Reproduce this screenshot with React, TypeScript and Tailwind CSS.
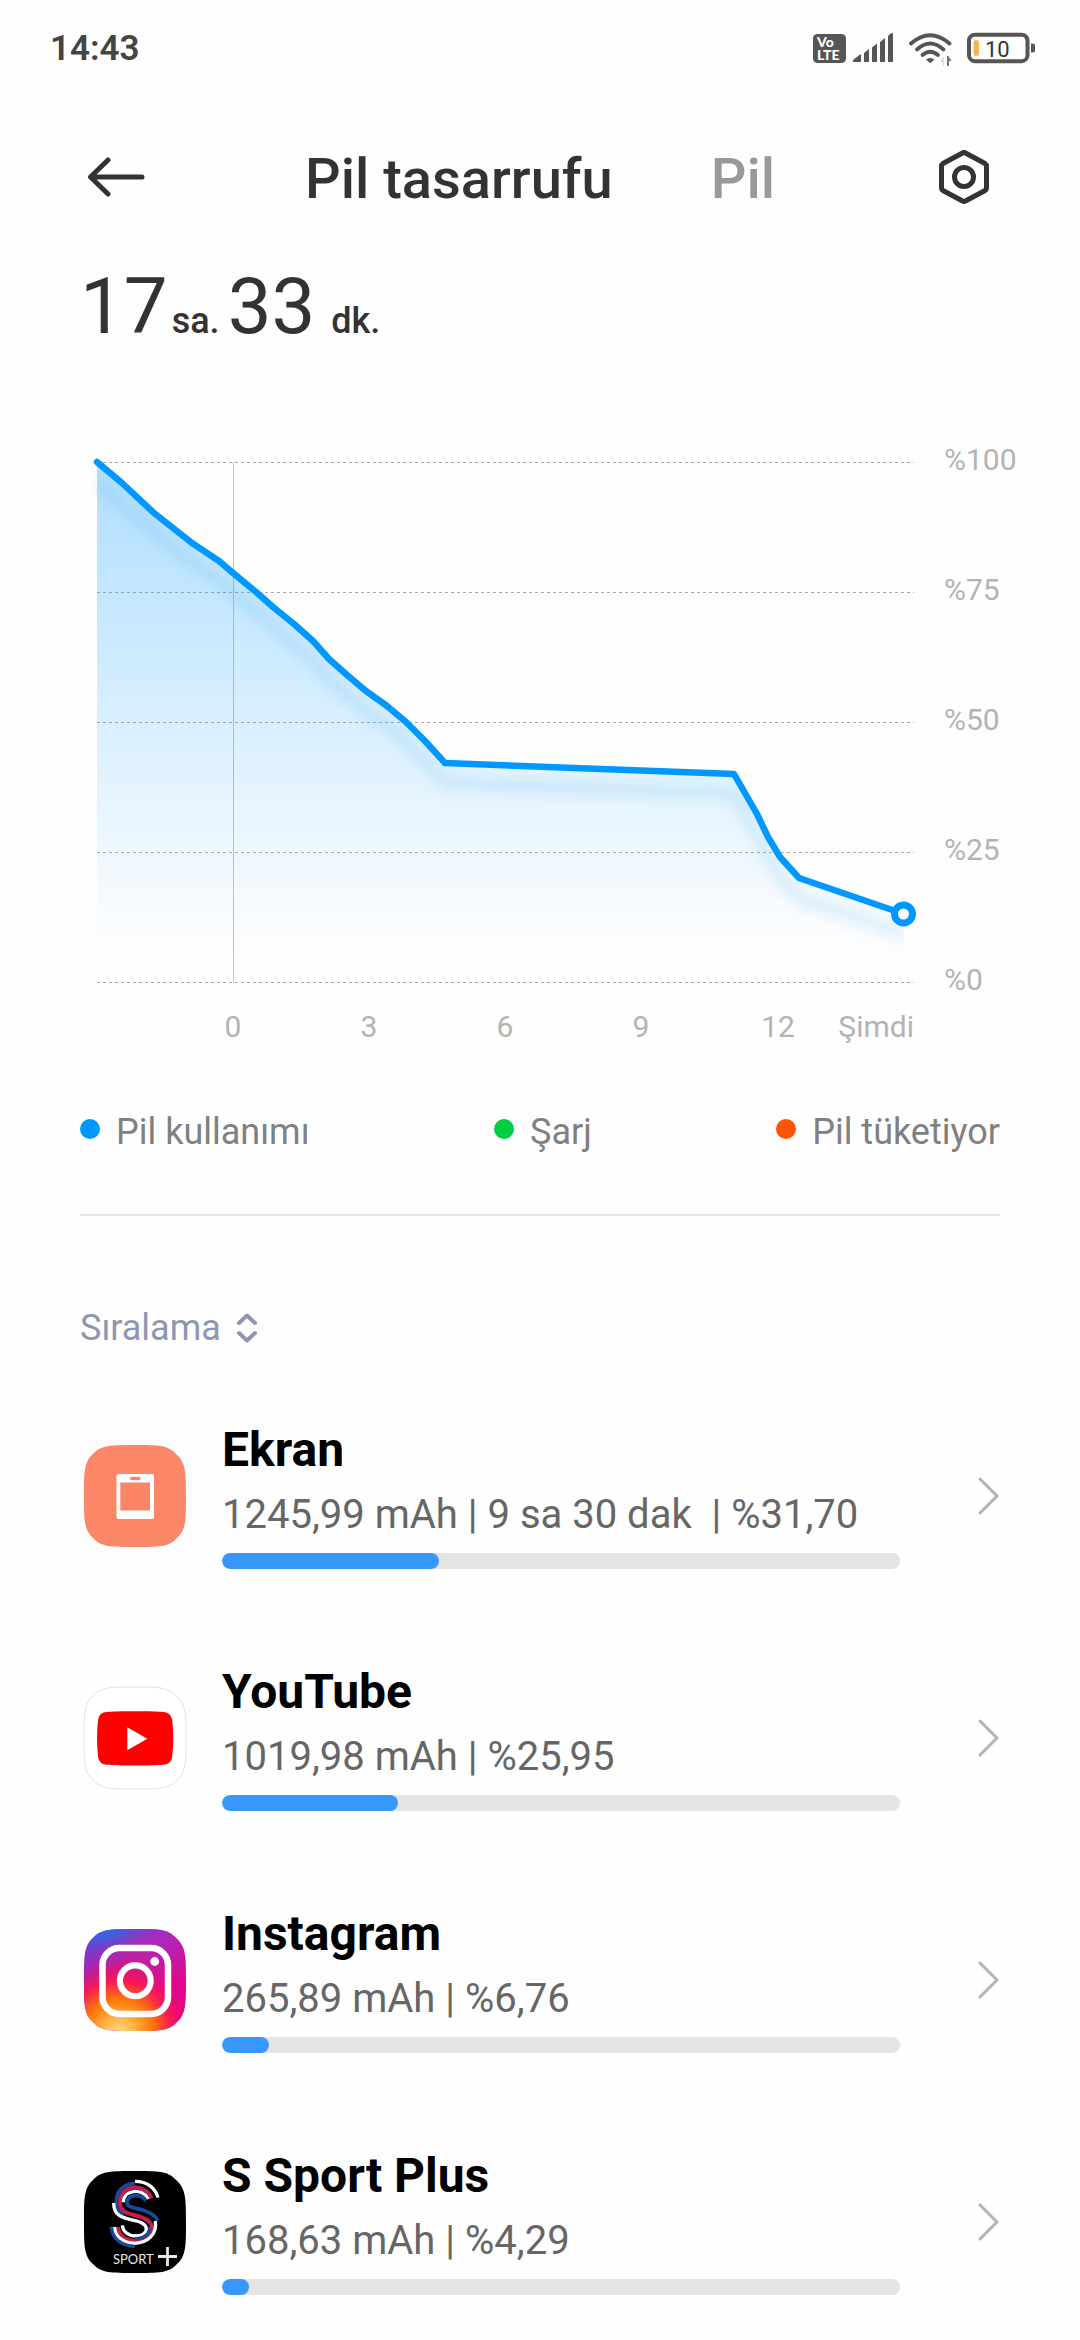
import React, { useState } from 'react';

interface AppUsage {
  id: string;
  name: string;
  detail: string;
  percent: number;
  icon: React.ReactNode;
}

const LINE_POINTS =
  '97,462 122,483 154,513 192,543 219,561 233,573 256,592 273,607 294,624 313,641 329,659 347,675 366,691 387,706 406,722 425,741 445,763 734,774 757,814 768,837 780,857 799,878 904,914';

const LEVELS = [
  { label: '%100', y: 462 },
  { label: '%75', y: 592 },
  { label: '%50', y: 722 },
  { label: '%25', y: 852 },
  { label: '%0', y: 982 },
];

const HOURS = [
  { label: '0', x: 233 },
  { label: '3', x: 369 },
  { label: '6', x: 505 },
  { label: '9', x: 641 },
  { label: '12', x: 778 },
];

const LEGEND = [
  { label: 'Pil kullanımı', color: 'bg-[#0098ff]' },
  { label: 'Şarj', color: 'bg-[#00cc44]' },
  { label: 'Pil tüketiyor', color: 'bg-[#ff5500]' },
];

// Rounded launcher tile shared by all app icons
const TILE = 'M52 1C76 1 84 1 92 9C103 18 103 28 103 52C103 76 103 86 94 94C86 103 76 103 52 103C28 103 18 103 10 94C1 86 1 76 1 52C1 28 1 18 10 10C18 1 28 1 52 1Z';

const ScreenIcon = () => (
  <svg viewBox="0 0 104 104" className="size-[104px]" aria-hidden="true">
    <path d={TILE} fill="#fb8768" />
    <rect x="33.5" y="30" width="37.5" height="45" rx="2" fill="#fff" />
    <rect x="37.3" y="38.5" width="29.7" height="28" fill="#f98566" />
    <rect x="47" y="32.8" width="10.5" height="3.2" rx="1.6" fill="#f98566" />
  </svg>
);

const YouTubeIcon = () => (
  <svg viewBox="0 0 104 104" className="size-[104px]" aria-hidden="true">
    <path d={TILE} fill="#fff" stroke="#e2e2e2" strokeWidth="1" />
    <path
      d="M52 25.2C68 25.2 75 25.5 80 26C86 26.5 88.6 29 89.3 35C90.6 46 90.6 58 89.3 70C88.6 75.6 86 78.2 80 78.8C70 79.8 34 79.8 24 78.8C18 78.2 15.7 75.6 15 70C13.7 58 13.7 46 15 35C15.7 29 18 26.5 24 26C29 25.5 36 25.2 52 25.2Z"
      fill="#ff0000"
    />
    <path d="M44.3 41.2L64.3 52.7L44.3 64.2Z" fill="#fff" />
  </svg>
);

const InstagramIcon = () => (
  <svg viewBox="0 0 104 104" className="size-[104px]" aria-hidden="true">
    <defs>
      <linearGradient id="ig-base" x1="0" y1="0" x2="1" y2="0.6">
        <stop offset="0" stopColor="#7a35d0" />
        <stop offset="0.45" stopColor="#c0209a" />
        <stop offset="1" stopColor="#e0058c" />
      </linearGradient>
      <radialGradient id="ig-blue" gradientUnits="userSpaceOnUse" cx="0" cy="0" r="1" gradientTransform="translate(18 -2) rotate(-6) scale(68 34)">
        <stop offset="0" stopColor="#1f74ea" />
        <stop offset="0.4" stopColor="#3f5fe0" stopOpacity="0.85" />
        <stop offset="1" stopColor="#7a3ad8" stopOpacity="0" />
      </radialGradient>
      <radialGradient id="ig-purple" gradientUnits="userSpaceOnUse" cx="80" cy="4" r="50">
        <stop offset="0" stopColor="#a22bc4" />
        <stop offset="1" stopColor="#b428b4" stopOpacity="0" />
      </radialGradient>
      <radialGradient id="ig-warm" gradientUnits="userSpaceOnUse" cx="36" cy="106" r="76">
        <stop offset="0" stopColor="#ffe08a" />
        <stop offset="0.2" stopColor="#ffb84a" />
        <stop offset="0.45" stopColor="#ff7a08" />
        <stop offset="0.7" stopColor="#fa1a50" stopOpacity="0.95" />
        <stop offset="1" stopColor="#ee0070" stopOpacity="0" />
      </radialGradient>
    </defs>
    <path d={TILE} fill="url(#ig-base)" />
    <path d={TILE} fill="url(#ig-purple)" />
    <path d={TILE} fill="url(#ig-blue)" />
    <path d={TILE} fill="url(#ig-warm)" />
    <rect x="19.5" y="20" width="65.5" height="66" rx="17" fill="none" stroke="#fff" strokeWidth="6.5" />
    <circle cx="52.3" cy="52.8" r="15.4" fill="none" stroke="#fff" strokeWidth="6.2" />
    <circle cx="71.7" cy="33.5" r="4.4" fill="#fff" />
  </svg>
);

const SSportIcon = () => (
  <svg viewBox="0 0 104 104" className="size-[104px]" aria-hidden="true">
    <path d={TILE} fill="#000" />
    {/* Ribbon strands are drawn on a 3x grid */}
    <g transform="scale(0.3333) translate(-39 -91)" fill="none" strokeWidth="10">
      <path d="M195 125C232 125 256 145 264 174" stroke="#fff" />
      <path d="M195 132C160 132 139 155 139 188C139 208 148 220 162 226" stroke="#174a9c" strokeWidth="11" />
      <path d="M245 176C225 128 150 134 150 188C150 224 184 221 215 233C245 244 251 262 242 282C222 320 144 308 144 262" stroke="#c41e4c" strokeWidth="12" />
      <path d="M235 178C216 143 160 150 160 188" stroke="#fff" />
      <path d="M228 183C212 160 171 164 171 188C171 206 195 203 220 212C246 221 259 230 263 243" stroke="#174a9c" strokeWidth="11" />
      <path d="M131 190C131 232 162 235 192 242C216 247 229 254 229 268C228 284 212 289 195 289C174 288 158 275 157 257" stroke="#fff" />
      <path d="M195 297C220 297 238 286 240 262" stroke="#174a9c" />
      <path d="M256 244C262 284 234 309 195 311C158 310 134 290 134 262" stroke="#fff" />
      <path d="M195 320C154 319 125 296 124 261" stroke="#174a9c" />
    </g>
    <text x="30" y="94" fontSize="13" fill="#e8e8e8" fontFamily="Lato, sans-serif">
      SPORT
    </text>
    <path d="M75 86.5H94M84.5 77V96" stroke="#e8e8e8" strokeWidth="2.8" />
  </svg>
);

const APPS: AppUsage[] = [
  { id: 'screen', name: 'Ekran', detail: '1245,99 mAh | 9 sa 30 dak  | %31,70', percent: 31.7, icon: <ScreenIcon /> },
  { id: 'youtube', name: 'YouTube', detail: '1019,98 mAh | %25,95', percent: 25.95, icon: <YouTubeIcon /> },
  { id: 'instagram', name: 'Instagram', detail: '265,89 mAh | %6,76', percent: 6.76, icon: <InstagramIcon /> },
  { id: 'ssport', name: 'S Sport Plus', detail: '168,63 mAh | %4,29', percent: 4.29, icon: <SSportIcon /> },
];

const StatusBar = () => (
  <div className="flex h-[98px] items-center justify-between pr-11 pl-[50px]">
    <span className="text-[35px] leading-10 font-semibold text-[#444444]">14:43</span>
    <svg viewBox="812 30 224 38" className="h-[38px] w-[224px]" aria-hidden="true">
      <rect x="813" y="34" width="33" height="29" rx="4.5" fill="#555" />
      <g fill="#fff" fontFamily="Lato, sans-serif" fontWeight="900">
        <text x="817" y="46.5" fontSize="14">Vo</text>
        <text x="817" y="60" fontSize="14">LTE</text>
      </g>
      <path
        d="M853 62V60L860 54.5H861V62ZM864 62V53L869 49V62ZM872 62V47.5L877 43.5V62ZM880 62V42L885 38V62ZM888 62V36Q890 33 893 33V62Z"
        fill="#555"
      />
      <g fill="none" stroke="#555" strokeWidth="3.8" strokeLinecap="round">
        <path d="M911 43.5Q930 27 949.5 43.5" />
        <path d="M917 49.5Q930 37.5 943.5 49.5" />
        <path d="M922.5 55Q930 48.5 938 55" />
      </g>
      <path d="M926 59.5Q930 56.5 934.5 59.5L930.2 63.2Z" fill="#555" />
      <path d="M944 56V66H942.5V62H940Z" fill="#ddd" />
      <path d="M947 66V56H948.5L951.5 61H949V66Z" fill="#777" />
      <rect x="969" y="34.7" width="58.5" height="26.5" rx="6" fill="none" stroke="#555" strokeWidth="4" />
      <path d="M1031 43.5H1032.5Q1035 43.5 1035 46V50Q1035 52.5 1032.5 52.5H1031Z" fill="#555" />
      <rect x="973.5" y="40" width="5.5" height="16" rx="2.5" fill="#f5b553" />
      <text x="985" y="56.7" fontSize="22" fill="#333">10</text>
    </svg>
  </div>
);

const BatteryChart = () => (
  <svg viewBox="0 430 1080 630" className="mt-21 block h-auto w-full" role="img" aria-label="Pil kullanımı">
    <defs>
      <linearGradient id="area" gradientUnits="userSpaceOnUse" x1="0" y1="462" x2="0" y2="982">
        <stop offset="0" stopColor="#0098ff" stopOpacity="0.31" />
        <stop offset="0.9" stopColor="#0098ff" stopOpacity="0.015" />
        <stop offset="1" stopColor="#0098ff" stopOpacity="0" />
      </linearGradient>
      <filter id="soften" filterUnits="userSpaceOnUse" x="60" y="430" width="900" height="600">
        <feGaussianBlur stdDeviation="6" />
      </filter>
      <clipPath id="plot">
        <rect x="92" y="430" width="812" height="560" />
      </clipPath>
    </defs>
    {LEVELS.map((level) => (
      <g key={level.label}>
        <path d={`M97 ${level.y + 0.5}H914`} stroke="#aaa" strokeWidth="1" strokeDasharray="3 3" />
        <text x="944" y={level.y + 8} fontSize="30" fill="#b3b3b3">
          {level.label}
        </text>
      </g>
    ))}
    <path d="M233.5 462V982" stroke="#c4c4c4" strokeWidth="1" />
    <polygon points={`97,982 ${LINE_POINTS} 904,982`} fill="url(#area)" />
    <g clipPath="url(#plot)">
      <polyline
        points={LINE_POINTS}
        transform="translate(0 20)"
        fill="none"
        stroke="#3fa9e0"
        strokeOpacity="0.16"
        strokeWidth="12"
        filter="url(#soften)"
      />
    </g>
    <polyline points={LINE_POINTS} fill="none" stroke="#0098ff" strokeWidth="6.5" strokeLinecap="round" strokeLinejoin="round" />
    <circle cx="903.5" cy="914" r="9" fill="#fff" stroke="#0098ff" strokeWidth="7" />
    {HOURS.map((hour) => (
      <text key={hour.label} x={hour.x} y="1037" fontSize="30" fill="#b3b3b3" textAnchor="middle">
        {hour.label}
      </text>
    ))}
    <text x="914" y="1037" fontSize="30" fill="#b3b3b3" textAnchor="end">
      Şimdi
    </text>
  </svg>
);

const UsageRow = ({ app }: { app: AppUsage }) => (
  <li>
    <button type="button" className="flex w-full items-center text-left">
      <span className="ml-[3px] shrink-0">{app.icon}</span>
      <span className="ml-[35px] block flex-1">
        <span className="block text-[48px] leading-14 font-bold text-black">{app.name}</span>
        <span className="mt-[13px] block text-[40px] leading-12 whitespace-pre text-[#666666]">{app.detail}</span>
        <span className="mt-3.5 block h-4 overflow-hidden rounded-full bg-[#e4e4e4]">
          <span
            className="block h-full rounded-full bg-[#3797fa]"
            style={{ width: `${Math.round(app.percent)}%` }}
          />
        </span>
      </span>
      <svg viewBox="0 0 22 38" className="ml-[78px] h-[38px] w-[22px] shrink-0" aria-hidden="true">
        <path d="M2 2L19 19L2 36" fill="none" stroke="#b3b3b3" strokeWidth="3" strokeLinecap="round" strokeLinejoin="round" />
      </svg>
    </button>
  </li>
);

export default function App() {
  const [tab, setTab] = useState<'saver' | 'battery'>('saver');

  return (
    <div className="min-h-screen bg-[#fefefe] font-[Roboto,'Noto_Sans',sans-serif]">
      <StatusBar />

      {/* Header */}
      <header className="flex h-[158px] items-center justify-between px-20">
        <button type="button" aria-label="Geri" className="flex h-18 w-18 items-center justify-center">
          <svg viewBox="0 0 58 40" className="h-10 w-[58px]" fill="none" stroke="#333" strokeWidth="5" strokeLinecap="round" strokeLinejoin="round">
            <path d="M21 3L3.5 20L21 37M4 20H55" />
          </svg>
        </button>
        <nav className="flex gap-[98px] pt-1 text-[56px] leading-16 font-medium">
          <button type="button" onClick={() => setTab('saver')} className={tab === 'saver' ? 'text-[#333333]' : 'text-[#999999]'}>
            Pil tasarrufu
          </button>
          <button type="button" onClick={() => setTab('battery')} className={tab === 'battery' ? 'text-[#333333]' : 'text-[#999999]'}>
            Pil
          </button>
        </nav>
        <button type="button" aria-label="Ayarlar" className="flex h-18 w-18 items-center justify-center">
          <svg viewBox="0 0 50 54" className="h-[54px] w-[50px]" fill="none" stroke="#333" strokeWidth="5">
            <path d="M23.5 3Q25 2 26.5 3L46 13.5Q47.5 14.5 47.5 16V38Q47.5 39.5 46 40.5L26.5 51Q25 52 23.5 51L4 40.5Q2.5 39.5 2.5 38V16Q2.5 14.5 4 13.5Z" />
            <circle cx="25" cy="27" r="9.5" />
          </svg>
        </button>
      </header>

      {/* Remaining time */}
      <p className="mt-3 flex items-baseline px-20 text-[78px] leading-[78px] text-[#333333]">
        17
        <span className="mr-2 ml-1 text-[36px] leading-10 font-medium">sa.</span>
        33
        <span className="ml-4 text-[36px] leading-10 font-medium">dk.</span>
      </p>

      <BatteryChart />

      <main className="px-20">
        <ul className="mt-12 flex justify-between text-[36px] leading-12 text-[#808080]">
          {LEGEND.map((item) => (
            <li key={item.label} className="flex items-start gap-4">
              <span className={`mt-[11px] size-5 rounded-full ${item.color}`} />
              {item.label}
            </li>
          ))}
        </ul>

        <hr className="mt-[58px] border-t-2 border-[#e5e5e5]" />

        <button type="button" className="mt-22 flex items-center gap-4 text-[36px] leading-12 text-[#8e96b4]">
          Sıralama
          <svg viewBox="0 0 20 30" className="h-[30px] w-5" fill="none" stroke="#8e96b4" strokeWidth="4" strokeLinecap="round" strokeLinejoin="round" aria-hidden="true">
            <path d="M2 10L10 2.5L18 10M2 20L10 27.5L18 20" />
          </svg>
        </button>

        <ul className="mt-[70px] flex flex-col gap-[95px] pb-8">
          {APPS.map((app) => (
            <UsageRow key={app.id} app={app} />
          ))}
        </ul>
      </main>
    </div>
  );
}
